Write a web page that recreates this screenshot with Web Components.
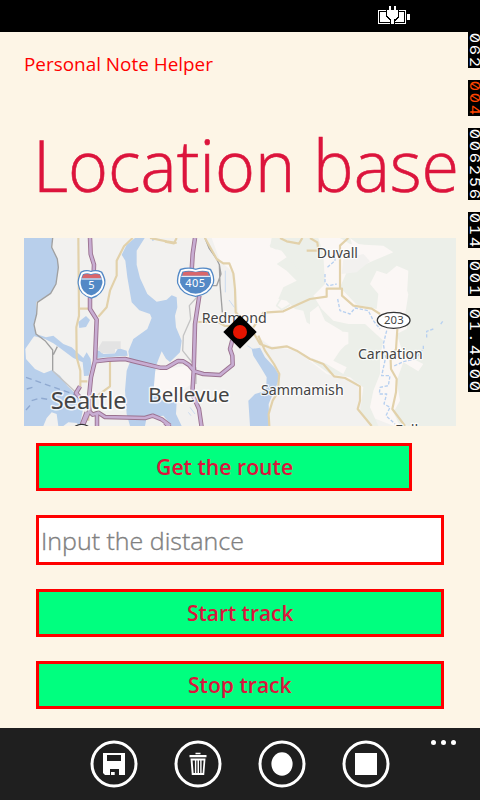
<!DOCTYPE html>
<html lang="en">
<head>
<meta charset="utf-8">
<title>Personal Note Helper</title>
<style>
html,body{margin:0;width:480px;height:800px;overflow:hidden;background:#fdf5e6;font-family:"Open Sans","Noto Sans",sans-serif}
</style>
</head>
<body>
<phone-screen>
  <status-bar slot="status"></status-bar>
  <page-header slot="header"></page-header>
  <area-map slot="content"></area-map>
  <action-button slot="content" style="width:376px;margin-top:17px" fit="137">Get the route</action-button>
  <distance-field slot="content"></distance-field>
  <action-button slot="content" style="margin-top:24px" fit="106">Start track</action-button>
  <action-button slot="content" style="margin-top:24px" fit="104">Stop track</action-button>
  <frame-counters slot="overlay"></frame-counters>
  <app-bar slot="bar"></app-bar>
</phone-screen>
<script>
class Base extends HTMLElement {
  constructor() {
    super();
    this.attachShadow({mode: 'open'}).innerHTML = this.constructor.markup;
  }
}
/* One line of text scaled horizontally to the width in its "w" attribute. */
customElements.define('fit-text', class extends Base {
  static markup = `<style>:host{display:block;white-space:nowrap}span{display:inline-block;transform-origin:0 50%}</style><span><slot></slot></span>`;
  connectedCallback() {
    const s = this.shadowRoot.querySelector('span');
    const w = s.offsetWidth, t = +this.getAttribute('w');
    this.style.width = t + 'px';
    if (w) s.style.transform = `scaleX(${t / w})`;
  }
});
customElements.define('phone-screen', class extends Base {
  static markup = `<style>:host{display:flex;flex-direction:column;position:relative;width:480px;height:800px;overflow:hidden;background:#fdf5e6}
  main{flex:1;display:flex;flex-direction:column;padding-left:36px;min-height:0}</style>
  <slot name="status"></slot><slot name="header"></slot><main><slot name="content"></slot></main><slot name="bar"></slot><slot name="overlay"></slot>`;
});
customElements.define('status-bar', class extends Base {
  static markup = `<style>:host{display:flex;justify-content:flex-end;height:32px;background:#000;padding-right:70px;box-sizing:border-box}svg{margin-top:6px}</style>
  <svg width="32" height="19" viewBox="0 0 32 19" shape-rendering="crispEdges"><path d="M.5 4.5h27v13H.5z" fill="#000" stroke="#fff"/><path d="M2 6h24v10H2z" fill="#fff"/><path d="M29 8h3v6h-3z" fill="#fff"/>
  <path d="M8 4h13v7l-4 4v3h-5v-3l-4-4z" fill="#000"/><path d="M11 0h2v4h3V0h2v4h2v6l-3 3h-1v5h-3v-5h-1l-3-3V4h2z" fill="#fff"/></svg>`;
});
customElements.define('page-header', class extends Base {
  static markup = `<style>:host{display:block;height:206px;flex:none}
  .app{font-size:19px;line-height:28px;color:#f00;margin:18px 0 0 23.5px;height:28px}
  .title{font-size:71px;font-weight:300;line-height:100px;color:#dc143c;-webkit-text-stroke:.6px #dc143c;margin:37px 0 0 33px;height:100px}</style>
  <fit-text class="app" w="189">Personal Note Helper</fit-text><fit-text class="title" w="426">Location base</fit-text>`;
});
customElements.define('action-button', class extends Base {
  static markup = `<style>:host{display:flex;justify-content:center;align-items:center;width:408px;height:48px;flex:none;box-sizing:border-box;border:3px solid #f00;background:#00ff7f;color:#dc143c;font-size:21.5px;font-weight:600;line-height:30px}</style><div></div>`;
  connectedCallback() {
    this.shadowRoot.querySelector('div').innerHTML = `<fit-text w="${this.getAttribute('fit')}"><slot></slot></fit-text>`;
  }
});
customElements.define('distance-field', class extends Base {
  static markup = `<style>:host{display:flex;align-items:center;width:408px;height:50px;flex:none;box-sizing:border-box;border:3px solid #f00;background:#fff;margin-top:24px;padding:1px 0 0 2px;color:#808080;font-size:23.5px;font-weight:300;-webkit-text-stroke:.35px #808080;line-height:34px}</style><fit-text w="203">Input the distance</fit-text>`;
});
/* Frame-rate counters printed down the right edge. */
customElements.define('frame-counters', class extends Base {
  static markup = `<style>:host{position:absolute;right:0;top:32px;width:12px;display:flex;flex-direction:column;gap:12px;color:#fff;font:400 9.8px/12px Inter,"DejaVu Sans Mono",monospace;font-feature-settings:"zero","tnum"}
  div{background:#000;display:flex;flex-direction:column}span{display:block;width:12px;height:12px;text-align:center;transform:rotate(90deg) scale(1.65,1.4)}.r{color:#ff4500}</style>`
  + ['062','004','006256','014','001','01.4300'].map((n, i) => `<div${i === 1 ? ' class="r"' : ''}>${[...n].map(c => `<span>${c}</span>`).join('')}</div>`).join('');
});
customElements.define('app-bar', class extends Base {
  static markup = `<style>:host{display:flex;position:relative;height:72px;flex:none;background:#1f1f1f;box-sizing:border-box;padding:12px 0 0 90px;gap:36px}
  .more{position:absolute;left:431px;top:12px;display:flex;gap:5px}i{width:5px;height:5px;border-radius:50%;background:#fff}svg{display:block;flex:none}</style>
  <svg width="48" height="48"><circle cx="24" cy="24" r="22" fill="none" stroke="#fff" stroke-width="3"/><path d="M13 13h22v22h-6v-6h-9v6h-5l-2-2zM17 15v6h14v-6zM21 32h3.7v3H21z" fill="#fff" fill-rule="evenodd"/></svg>
  <svg width="48" height="48"><circle cx="24" cy="24" r="22" fill="none" stroke="#fff" stroke-width="3"/><path d="M15.5 15h17v2.3h-17zM21.5 12.8h5v1.4h-5zM16.5 18.5h15l-1.3 16.5H17.8zM18.6 20.5l1 12.5h1.3V20.5zM22.3 20.5V33h1.2V20.5zM25 20.5V33h1.2V20.5zM27.6 20.5V33h1l1-12.5z" fill="#fff" fill-rule="evenodd"/></svg>
  <svg width="48" height="48"><circle cx="24" cy="24" r="22" fill="none" stroke="#fff" stroke-width="3"/><ellipse cx="24" cy="24" rx="10.6" ry="11.7" fill="#fff"/></svg>
  <svg width="48" height="48"><circle cx="24" cy="24" r="22" fill="none" stroke="#fff" stroke-width="3"/><path d="M13 13h22v22H13z" fill="#fff"/></svg>
  <div class="more"><i></i><i></i><i></i></div>`;
});
const roads = ['M210 12L212 60 222 92 221 120','M210 185V225L230 257 225 380 213 430 208 480V530L186 580','M225 382L265 377 315 375 350 384 420 401 440 401 474 381 490 382 507 393 523 412 550 420 600 423 638 392 637 365 630 345 637 318','M525 12L518 60 515 110','M538 185L525 270 521 412 517 480 537 525 545 580','M206 530L218 542 235 536 255 549 375 552 398 545 425 556 450 575M231 540V580M184 576L200 535M180 457L168 477 182 492M435 566L460 590'].join('');
const shield5 = 'M184 115Q200 108 213 114 228 108 244 115 256 136 253 150 246 182 214 191 180 182 176 150 174 136 184 115z';
const shield405 = 'M482 107Q505 100 527 107 550 100 571 107 583 128 579 147 567 181 527 186 486 181 474 147 472 128 482 107z';
customElements.define('area-map', class extends Base {
  static markup = `<style>:host{display:block;width:432px;height:188px;flex:none;margin-left:-12px}svg{display:block}text{font-family:"Noto Sans","Open Sans",sans-serif;fill:#444;stroke:#fff;stroke-opacity:.8;stroke-width:7;stroke-linejoin:round;paint-order:stroke}.num{fill:#fff;stroke:none}</style>
  <svg width="432" height="188" viewBox="12 12 1296 564" fill="none" stroke-linejoin="round">
  <path fill="#f2f1ef" d="M12 12H1308V576H12z"/>
  <path fill="#fbf7f5" d="M590 12H1308V576H1250L1120 575 1030 540 1010 440 920 420 830 350 750 335 690 290 655 240 645 120 600 80 575 12zM405 410L500 395 520 420 515 450 440 500 400 480z"/>
  <path fill="#ecefe9" d="M755 12L1308 12V576H1140L1120 535 1140 500 1130 440 1150 385 1195 412 1210 390 1150 360 1130 300 1160 285 1165 245 1135 230 1160 200 1165 110 1130 95 1100 120 1070 110 1050 150 1075 180 1070 225 1010 212 960 160 980 115 1060 80 1120 55 1090 35 990 30 960 12 895 12 910 60 915 150 880 185 905 225 940 260 985 270 1035 270 1090 320 1080 370 1080 420 1060 470 1050 520 1075 576 1050 576 1020 535 1030 460 990 430 930 420 880 385 870 355 890 330 935 350 985 330 985 295 945 290 930 320 900 290 860 265 850 230 825 225 800 200 775 195 790 160 830 140 800 110 770 90 800 70 785 50 750 40z"/>
  <path fill="#fbf7f5" d="M870 235L895 215 915 260 965 290 985 325 960 350 940 380 980 400 970 420 920 390 870 370zM1090 155L1120 170 1145 130 1165 180 1155 245 1095 230 1080 200zM990 12L1015 30 1065 38 1115 55 1060 60 1000 42z"/>
  <path fill="#f2f1ef" d="M970 75L1030 60 1050 82 1010 115 965 120zM870 435L910 430 960 475 975 530 955 576H870z"/>
  <g stroke="#ecefe9" stroke-width="5"><path d="M795 95l20-15 12 25 30 5M785 190l-15 25 15 12 25 -15M770 45l-20 -12M820 12l25 22"/></g>
  <g fill="#b8cfeb">
   <path d="M12 12H98L94 40 112 72 116 100 108 150 92 178 48 205 50 240 42 272 48 300 78 310 100 305 130 330 155 340 190 372 200 355 212 375 214 395 206 425 192 426 188 385 160 372 120 342 100 328 75 315 38 305 18 300 15 330 18 375 45 405 72 418 97 408 120 425 142 455 165 478 182 492 188 530 180 576H12z"/>
   <path d="M345 12L320 32 305 62 316 80 322 130 335 205 358 229 390 240 395 252 382 285 340 315 325 352 330 384 320 410 315 470 320 540 330 576H375L380 550 430 545 455 576H485L468 540 470 505 440 500 400 475 405 418 408 395 425 352 438 374 450 384 480 355 485 320 468 280 465 245 472 220 470 190 455 184 440 197 410 203 382 180 360 132 350 92 350 50 374 12z"/>
   <path d="M175 264L198 246 210 258 198 279 178 282zM228 348L242 352 250 360 285 358 295 342 320 350 323 365 230 372zM695 345L720 341 735 370 765 402 778 425 772 450 760 475 746 510 748 576H690L685 500 705 480 738 470 740 430 722 400 700 365zM88 545L105 540 120 555 115 576H75zM395 12l18 2-16 7z"/>
  </g>
  <path fill="#b8cfeb" d="M12 300H50L40 310 12 350z"/>
  <path fill="#f2f1ef" d="M70 576L80 552 95 535 110 540 115 576zM130 576L145 565 170 567 180 576z"/>
  <path fill="#e3e3e3" d="M247 322H302V345H285V358H245L233 345z"/>
  <g stroke="#a0a0a0" stroke-width="4"><path d="M98 12L95 40 112 75 115 100 108 150 92 178 52 205 50 240 42 272 48 300 75 320 98 348V410M112 338L100 362M598 90L600 150 607 235M598 92L603 120 590 155 575 155M555 12L567 42 590 75 598 92"/><path stroke="#c4c4c4" d="M98 410L135 445 175 482M530 190L508 215 512 255 490 305 488 350 520 390M528 400V450"/></g>
  <g stroke="#e2d1aa" stroke-width="6.5"><path d="M175 12L177 245 169 280 170 370 181 410V460M177 224H210M338 12L312 37 290 80 290 125 270 170 260 220 235 248M270 382V457L232 485M180 442h22M390 12L440 22 470 27M205 560V515"/>
  <path d="M435 23L462 28 470 12M555 12L590 75 610 88 628 88 640 118 645 165 647 235 660 250M535 264H595L615 276H650M700 280L730 236 790 232 830 213 870 195 920 188V164H966V185L1000 215 1055 224 1080 240M900 50H860M870 12L892 25 895 50M985 12L960 35 960 164M700 295L720 330 755 343 800 337 830 350 870 375 910 390 942 427 975 432 1020 457 1020 500 1013 525 1055 576M715 305L735 350 762 390 778 420 773 475 758 500 746 540 748 576M1132 285L1128 345 1112 380 1113 405 1130 435 1128 475 1117 525 1155 576M780 12l20 10 37 7 10-17"/></g>
  <g stroke="#b7d0f0" stroke-width="4" stroke-dasharray="10 5"><path d="M945 55L945 80 920 102M915 120V145L925 155 950 150M953 195L960 230 990 240 1005 222 1045 230 1060 260 1080 285M1100 290L1090 330 1097 370 1085 425 1110 425 1105 455 1080 460 1078 480 1100 480 1092 510 1110 520 1098 545 1125 570M1268 262L1260 273M1240 285L1220 292V315M1210 335V345L1185 375 1150 383 1120 397"/><path d="M616 110V175M627 198L643 220M682 335l20 13M510 520l15 20M505 535l8 10" stroke-dasharray="none" stroke-width="2"/></g>
  <g stroke="#8fa9d0" stroke-width="4" stroke-dasharray="18 12"><path d="M18 430L60 445 165 482M20 465l28-8M18 528l15-17M35 500l25-8 28 5"/></g>
  <path stroke="#9b7290" stroke-width="13.5" d="${roads}"/><path stroke="#c8add3" stroke-width="8" d="${roads}"/>
  <g fill="#5389c6" stroke="#5389c6" stroke-width="6"><path d="${shield5}"/><path d="${shield405}"/></g>
  <g stroke="#fff" stroke-width="6"><path d="${shield5}" transform="translate(214 151) scale(.91) translate(-214 -151)"/><path d="${shield405}" transform="translate(527 145) scale(.93 .91) translate(-527 -145)"/></g>
  <path fill="#d9666b" d="M190 122Q202 117 213 123 226 117 239 122L243 133H186zM490 115Q510 110 527 115 544 110 563 115L567 125H487z"/><path stroke="#fff" stroke-width="3" d="M184 135H245M484 127H571"/>
  <text class="num" x="205" y="165" font-size="33">5</text><text class="num" x="496" y="159" font-size="33" textLength="59">405</text>
  <ellipse cx="1121" cy="259" rx="49" ry="24" fill="#fff" stroke="#333" stroke-width="4"/>
  <text x="1092" y="271" font-size="34" textLength="59">203</text>
  <text x="92" y="525" font-size="68" textLength="228" lengthAdjust="spacingAndGlyphs" style="stroke-width:9">Seattle</text>
  <text x="385" y="504" font-size="62" textLength="244" lengthAdjust="spacingAndGlyphs" style="stroke-width:9">Bellevue</text>
  <text x="545" y="266" font-size="43" textLength="195" lengthAdjust="spacingAndGlyphs">Redmond</text>
  <text x="890" y="73" font-size="43" textLength="124" lengthAdjust="spacingAndGlyphs">Duvall</text>
  <text x="1014" y="375" font-size="43" textLength="194" lengthAdjust="spacingAndGlyphs">Carnation</text>
  <text x="723" y="483" font-size="43" textLength="248" lengthAdjust="spacingAndGlyphs">Sammamish</text>
  <text x="1125" y="602" font-size="43" textLength="70" lengthAdjust="spacingAndGlyphs">Fall</text>
  <ellipse cx="185" cy="588" rx="25" ry="17" fill="#fff" stroke="#333" stroke-width="4"/>
  <path fill="#000" d="M660 244L710 294 660 344 610 294z"/><circle cx="660" cy="294" r="21" fill="#e51400"/>
  </svg>`;
});
</script>
</body>
</html>
